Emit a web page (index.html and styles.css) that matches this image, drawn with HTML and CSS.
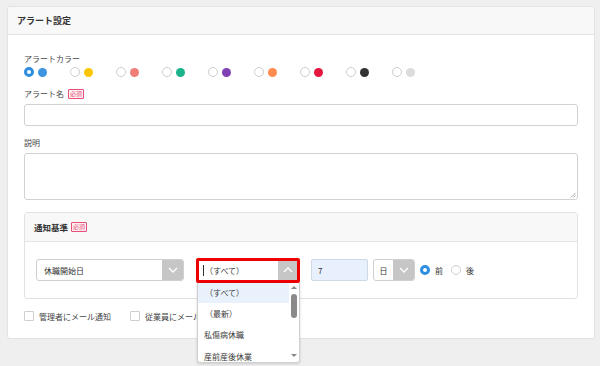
FILE: index.html
```html
<!DOCTYPE html>
<html lang="ja">
<head>
<meta charset="utf-8">
<link rel="stylesheet" href="styles.css">
</head>
<body>
<div class="card">
  <div class="card-head">アラート設定</div>
  <div class="card-body">
    <div class="label">アラートカラー</div>
    <div class="colors">
      <div class="color-opt"><span class="radio on"></span><span class="dot" style="background:#3b95e0"></span></div>
      <div class="color-opt"><span class="radio"></span><span class="dot" style="background:#fbc600"></span></div>
      <div class="color-opt"><span class="radio"></span><span class="dot" style="background:#f07f7a"></span></div>
      <div class="color-opt"><span class="radio"></span><span class="dot" style="background:#1bb38c"></span></div>
      <div class="color-opt"><span class="radio"></span><span class="dot" style="background:#8140b4"></span></div>
      <div class="color-opt"><span class="radio"></span><span class="dot" style="background:#ff8b4e"></span></div>
      <div class="color-opt"><span class="radio"></span><span class="dot" style="background:#e5163f"></span></div>
      <div class="color-opt"><span class="radio"></span><span class="dot" style="background:#333333"></span></div>
      <div class="color-opt"><span class="radio"></span><span class="dot" style="background:#dcdcdc"></span></div>
    </div>
    <div class="label gap-l">アラート名<span class="req">必須</span></div>
    <div class="input"></div>
    <div class="label gap-l">説明</div>
    <div class="textarea">
      <svg class="grip" width="6" height="6" viewBox="0 0 6 6"><path d="M5.5 1 L1 5.5 M5.5 3.5 L3.5 5.5" stroke="#999" stroke-width="0.8"/></svg>
    </div>
    <div class="panel">
      <div class="panel-head">通知基準<span class="req">必須</span></div>
      <div class="panel-body">
        <div class="select sel-wide">
          <span class="sel-text">休職開始日</span>
          <span class="sel-btn"><svg width="10" height="6" viewBox="0 0 10 6"><path d="M1 1 L5 5 L9 1" fill="none" stroke="#fff" stroke-width="1.3"/></svg></span>
        </div>
        <div class="combo-wrap">
          <div class="combo">
            <span class="caret"></span><span class="combo-text">（すべて）</span>
            <span class="sel-btn"><svg width="10" height="6" viewBox="0 0 10 6"><path d="M1 5 L5 1 L9 5" fill="none" stroke="#fff" stroke-width="1.3"/></svg></span>
          </div>
          <div class="dropdown">
            <ul class="options">
              <li class="opt active">（すべて）</li>
              <li class="opt">（最新）</li>
              <li class="opt">私傷病休職</li>
              <li class="opt">産前産後休業</li>
            </ul>
            <div class="scrollbar">
              <span class="arrow-up"></span>
              <span class="thumb"></span>
              <span class="arrow-down"></span>
            </div>
          </div>
        </div>
        <div class="num">7</div>
        <div class="select sel-unit">
          <span class="sel-text">日</span>
          <span class="sel-btn"><svg width="10" height="6" viewBox="0 0 10 6"><path d="M1 1 L5 5 L9 1" fill="none" stroke="#fff" stroke-width="1.3"/></svg></span>
        </div>
        <div class="radio-group">
          <span class="radio on"></span><span class="rtext">前</span>
          <span class="radio"></span><span class="rtext">後</span>
        </div>
      </div>
    </div>
    <div class="checks">
      <label class="check"><span class="box"></span>管理者にメール通知</label>
      <label class="check"><span class="box"></span>従業員にメール通知</label>
    </div>
  </div>
</div>
</body>
</html>
```
FILE: styles.css
```css
* { box-sizing: border-box; }
html, body { margin: 0; padding: 0; }
body {
  background: #efefef;
  font-family: "Noto Sans CJK JP", "Noto Sans", sans-serif;
  font-size: 8px;
  color: #444;
  padding: 6px 5px 0 7px;
  width: 600px;
  height: 366px;
  overflow: hidden;
}
.card {
  width: 588px;
  background: #fff;
  border: 1px solid #e2e2e2;
  border-radius: 3px;
}
.card-head {
  height: 28px;
  background: #f8f8f8;
  border-bottom: 1px solid #e3e3e3;
  border-radius: 3px 3px 0 0;
  padding-left: 9px;
  font-size: 9px;
  font-weight: bold;
  color: #333;
  line-height: 27px;
}
.card-body {
  padding: 18px 16px 17px 16px;
}
.label {
  height: 11px;
  line-height: 11px;
  display: flex;
  align-items: center;
  color: #444;
}
.gap-l { margin-top: 11px; }
.req {
  display: inline-block;
  margin-left: 4px;
  border: 1px solid #e8507a;
  background: #fdeef2;
  color: #e8507a;
  font-size: 6px;
  line-height: 8px;
  padding: 0 1px;
  border-radius: 1px;
}
.colors {
  display: flex;
  margin-top: 3px;
  height: 10px;
}
.color-opt {
  width: 46px;
  display: flex;
  align-items: center;
  gap: 4px;
}
.radio {
  display: inline-block;
  width: 10px;
  height: 10px;
  border-radius: 50%;
  border: 1px solid #cfcfcf;
  background: #fff;
  flex: none;
}
.radio.on {
  border: 3px solid #2d8ee0;
}
.dot {
  display: inline-block;
  width: 9px;
  height: 9px;
  border-radius: 50%;
}
.input {
  margin-top: 5px;
  height: 22px;
  border: 1px solid #d2d2d2;
  border-radius: 3px;
}
.textarea {
  margin-top: 5px;
  height: 47px;
  border: 1px solid #d2d2d2;
  border-radius: 3px;
  position: relative;
}
.grip { position: absolute; right: 1px; bottom: 1px; }
.panel {
  margin-top: 12px;
  border: 1px solid #e2e2e2;
  border-radius: 3px;
}
.panel-head {
  height: 29px;
  background: #f8f8f8;
  border-bottom: 1px solid #e3e3e3;
  padding-left: 9px;
  display: flex;
  align-items: center;
  font-weight: bold;
  color: #333;
  font-size: 8.5px;
}
.panel-head .req { margin-left: 3px; font-weight: normal; }
.panel-body {
  display: flex;
  align-items: center;
  padding: 15px 11px 15px 11px;
  height: 56px;
}
.select {
  height: 22px;
  border: 1px solid #cfcfcf;
  border-radius: 3px;
  display: flex;
  overflow: hidden;
  background: #fff;
}
.sel-text {
  flex: 1;
  display: flex;
  align-items: center;
  color: #333;
}
.sel-btn {
  width: 21px;
  background: #c6c6c6;
  display: flex;
  align-items: center;
  justify-content: center;
}
.sel-wide { width: 148px; }
.sel-wide .sel-text { padding-left: 7px; }
.combo-wrap {
  position: relative;
  margin-left: 12px;
}
.combo {
  width: 104px;
  height: 25px;
  border: 3px solid #ee0000;
  border-radius: 2px;
  display: flex;
  align-items: center;
  background: #fff;
}
.combo .caret {
  width: 1px;
  height: 11px;
  background: #333;
  margin-left: 4px;
}
.combo-text { flex: 1; margin-left: 1px; color: #333; }
.combo .sel-btn { height: 19px; width: 19px; }
.dropdown {
  position: absolute;
  left: 1px;
  top: 25px;
  width: 103px;
  height: 80px;
  background: #fff;
  border: 1px solid #cfcfcf;
  border-top: none;
  border-radius: 0 0 3px 3px;
  box-shadow: 0 1px 3px rgba(0,0,0,0.15);
  display: flex;
  overflow: hidden;
  z-index: 5;
}
.options {
  list-style: none;
  margin: 0;
  padding: 0;
  flex: 1;
}
.opt {
  height: 21.5px;
  display: flex;
  align-items: center;
  padding-left: 6px;
  color: #3a3a3a;
}
.opt.active { background: #e9f1fc; height: 20px; padding-left: 7px; }
.opt:nth-child(2) { padding-left: 7px; }
.scrollbar {
  width: 10px;
  position: relative;
  background: #fff;
}
.arrow-up, .arrow-down {
  position: absolute;
  left: 2px;
  width: 0; height: 0;
  border-left: 3px solid transparent;
  border-right: 3px solid transparent;
}
.arrow-up { top: 3px; border-bottom: 3px solid #888; }
.arrow-down { bottom: 5px; border-top: 3px solid #888; }
.thumb {
  position: absolute;
  left: 2px;
  top: 11px;
  width: 6px;
  height: 24px;
  border-radius: 3px;
  background: #8a8a8a;
}
.num {
  margin-left: 11px;
  width: 57px;
  height: 22px;
  background: #e8f0fe;
  border: 1px solid #cfd8e6;
  border-radius: 2px;
  display: flex;
  align-items: center;
  padding-left: 6px;
  color: #333;
}
.sel-unit { margin-left: 5px; width: 42px; }
.sel-unit .sel-text { justify-content: center; }
.radio-group {
  margin-left: 5px;
  display: flex;
  align-items: center;
}
.rtext { margin: 0 8px 0 5px; color: #333; }
.checks {
  margin-top: 12px;
  display: flex;
  height: 10px;
  align-items: center;
}
.check {
  display: flex;
  align-items: center;
  width: 106px;
  color: #444;
  white-space: nowrap;
}
.box {
  flex: none;
  width: 10px;
  height: 10px;
  border: 1px solid #cfcfcf;
  border-radius: 1px;
  margin-right: 5px;
}
```
